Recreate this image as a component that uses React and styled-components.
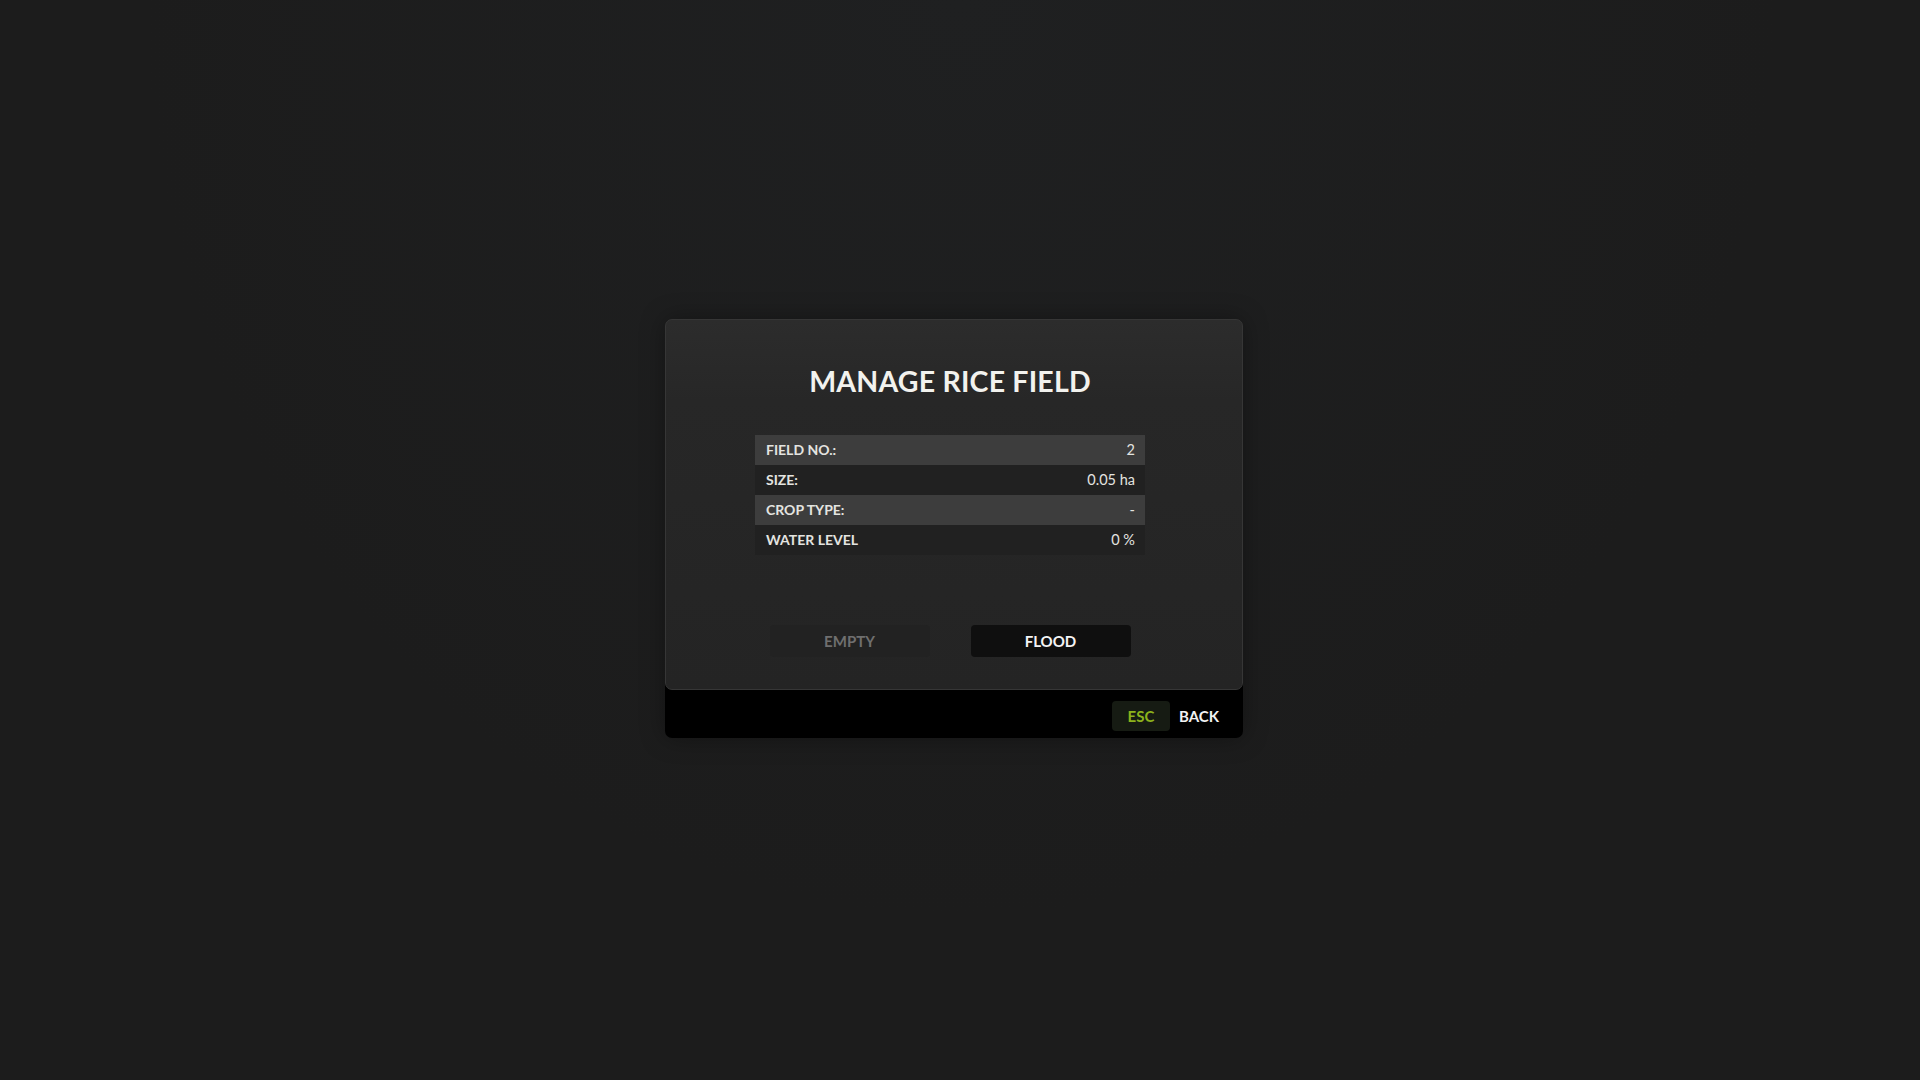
import React from 'react';
import styled, { createGlobalStyle } from 'styled-components';

const GlobalStyle = createGlobalStyle`
  html, body {
    margin: 0;
    padding: 0;
    height: 100%;
    background: #1c1c1c;
    font-family: 'Lato', 'Open Sans', sans-serif;
  }
  #root {
    height: 100%;
  }
`;

const Screen = styled.div`
  width: 100%;
  height: 100vh;
  display: flex;
  align-items: center;
  justify-content: center;
  box-sizing: border-box;
  padding: 0 12px 24px 0;
  background:
    radial-gradient(ellipse at 50% 0%, #1f2021 0%, rgba(28, 28, 28, 0) 60%),
    #1c1c1c;
`;

const Dialog = styled.div`
  width: 578px;
  display: flex;
  flex-direction: column;
  border-radius: 7px;
  box-shadow: 0 0 24px rgba(0, 0, 0, 0.35);
`;

const Body = styled.div`
  display: flex;
  flex-direction: column;
  align-items: center;
  padding: 44px 8px 32px 0;
  background: linear-gradient(180deg, #2c2c2c 0%, #272727 22%, #242424 100%);
  border: 1px solid #363636;
  border-radius: 7px;
  position: relative;
  z-index: 1;
`;

const Title = styled.h1`
  margin: 0;
  font-size: 28.5px;
  line-height: 34px;
  font-weight: 700;
  color: #f2f2ee;
  letter-spacing: 0.2px;
`;

const InfoTable = styled.div`
  width: 390px;
  margin-top: 37px;
  display: flex;
  flex-direction: column;
`;

const InfoRow = styled.div`
  height: 30px;
  display: flex;
  align-items: center;
  justify-content: space-between;
  padding: 0 10px 0 11px;
  background: ${(p) => (p.$shade ? '#3d3d3d' : '#212121')};
  color: #e4e4e0;
`;

const Label = styled.span`
  font-size: 14px;
  font-weight: 700;
`;

const Value = styled.span`
  font-size: 14.5px;
  font-weight: 400;
`;

const Actions = styled.div`
  display: flex;
  gap: 41px;
  margin-top: 70px;
`;

const ActionButton = styled.button`
  width: 160px;
  height: 32px;
  border: none;
  border-radius: 4px;
  font-family: inherit;
  font-size: 15px;
  font-weight: 700;
  cursor: pointer;
  background: ${(p) => (p.$active ? '#0f0f0f' : '#222222')};
  color: ${(p) => (p.$active ? '#f4f4f4' : '#6f6f6f')};
`;

const Footer = styled.div`
  height: 55px;
  margin-top: -7px;
  padding: 11px 24px 0 0;
  box-sizing: border-box;
  display: flex;
  align-items: center;
  justify-content: flex-end;
  gap: 9px;
  background: #000;
  border-radius: 0 0 7px 7px;
`;

const KeyBadge = styled.span`
  width: 58px;
  height: 30px;
  display: flex;
  align-items: center;
  justify-content: center;
  border-radius: 4px;
  background: #161b13;
  color: #8cb21c;
  font-size: 15px;
  font-weight: 700;
`;

const FooterLabel = styled.span`
  color: #f2f2f2;
  font-size: 15px;
  font-weight: 700;
`;

const rows = [
  { label: 'FIELD NO.:', value: '2' },
  { label: 'SIZE:', value: '0.05 ha' },
  { label: 'CROP TYPE:', value: '-' },
  { label: 'WATER LEVEL', value: '0 %' },
];

export default function App() {
  return (
    <>
      <GlobalStyle />
      <Screen>
        <Dialog>
          <Body>
            <Title>MANAGE RICE FIELD</Title>
            <InfoTable>
              {rows.map((r, i) => (
                <InfoRow key={r.label} $shade={i % 2 === 0}>
                  <Label>{r.label}</Label>
                  <Value>{r.value}</Value>
                </InfoRow>
              ))}
            </InfoTable>
            <Actions>
              <ActionButton>EMPTY</ActionButton>
              <ActionButton $active>FLOOD</ActionButton>
            </Actions>
          </Body>
          <Footer>
            <KeyBadge>ESC</KeyBadge>
            <FooterLabel>BACK</FooterLabel>
          </Footer>
        </Dialog>
      </Screen>
    </>
  );
}
